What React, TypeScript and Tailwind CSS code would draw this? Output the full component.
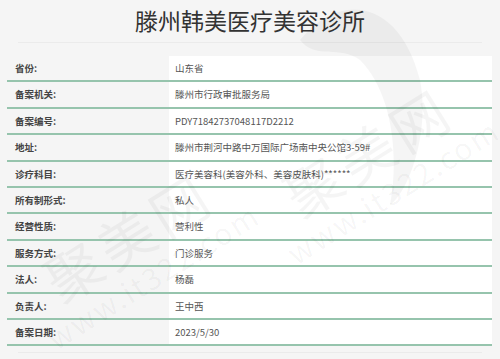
const rows: [string, string][] = [
  ["省份:", "山东省"],
  ["备案机关:", "滕州市行政审批服务局"],
  ["备案编号:", "PDY71842737048117D2212"],
  ["地址:", "滕州市荆河中路中万国际广场南中央公馆3-59#"],
  ["诊疗科目:", "医疗美容科(美容外科、美容皮肤科)******"],
  ["所有制形式:", "私人"],
  ["经营性质:", "营利性"],
  ["服务方式:", "门诊服务"],
  ["法人:", "杨磊"],
  ["负责人:", "王中西"],
  ["备案日期:", "2023/5/30"],
];

function Watermark({ className }: { className: string }) {
  return (
    <div className={`pointer-events-none absolute flex flex-col items-center -rotate-[32deg] text-black/[0.04] ${className}`}>
      <span className="text-[56px] leading-none tracking-[6px]">聚美网</span>
      <span className="mt-1 text-[30px] leading-none tracking-[2px]">www.it322.com</span>
    </div>
  );
}

export default function App() {
  return (
    <div
      className="relative h-[359px] w-[500px] overflow-hidden bg-[#f5f5f5]"
      style={{ fontFamily: '"Noto Sans CJK SC", "Noto Sans", sans-serif' }}
    >
      <h1 className="flex h-[40px] items-center justify-center text-[23px] font-normal text-[#333]">
        滕州韩美医疗美容诊所
      </h1>
      <div className="mx-[18px] mt-[2px] h-px bg-[#ebebeb]" />

      <div className="ml-[7px] mt-[13px] w-[485px]">
        {rows.map(([label, value]) => (
          <div key={label} className="flex h-[26.4px] border-b-2 border-[#96c4ad]">
            <div className="flex w-[162px] items-center pl-2 text-[9.5px] font-bold text-[#444]">
              {label}
            </div>
            <div className="flex flex-1 items-center bg-white pl-[6px] text-[9.5px] text-[#555]">
              {value}
            </div>
          </div>
        ))}
      </div>
      <div className="mx-[18px] mt-[6px] h-px bg-[#ebebeb]" />

      <svg className="pointer-events-none absolute left-[280px] top-0" width="150" height="210" viewBox="0 0 150 210">
        <path
          d="M20 40 C60 -10 120 0 140 80 C150 130 130 190 110 205 C120 150 110 90 80 60 C60 45 35 60 20 40 Z"
          fill="rgba(0,0,0,0.04)"
        />
      </svg>
      <Watermark className="left-[15px] top-[205px]" />
      <Watermark className="left-[255px] top-[120px]" />
    </div>
  );
}
